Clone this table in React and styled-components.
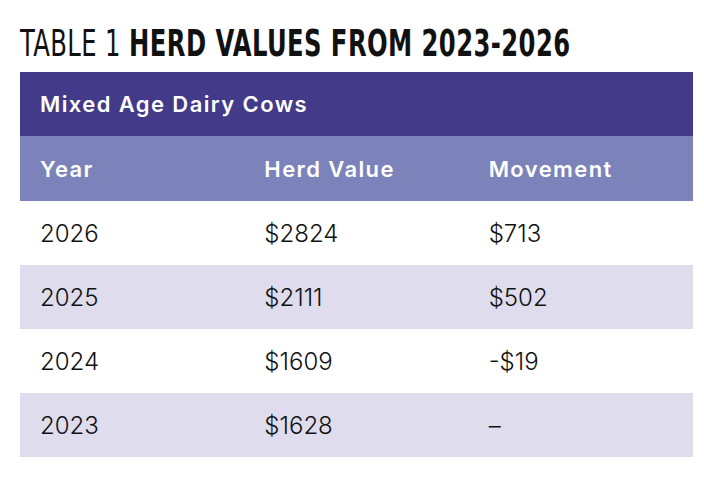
import React from "react";
import styled, { createGlobalStyle } from "styled-components";

const Global = createGlobalStyle`
  html, body { margin: 0; padding: 0; background: #fff; }
  body { font-family: Inter, "Noto Sans", sans-serif; }
`;

const Page = styled.div`
  width: 704px;
  height: 482px;
  box-sizing: border-box;
  padding: 24px 11px 0 20px;
  background: #fff;
`;

const Title = styled.h1`
  margin: 0 0 10px;
  height: 38px;
  font-family: "DejaVu Sans Condensed", "Liberation Sans", sans-serif;
  font-size: 38px;
  line-height: 38px;
  color: #111;
  letter-spacing: 0.6px;
  white-space: nowrap;
  transform: scaleX(0.71);
  transform-origin: left center;
`;

const Light = styled.span`
  font-weight: 400;
`;

const Strong = styled.span`
  font-weight: 700;
`;

const Table = styled.table`
  width: 673px;
  border-collapse: collapse;
  table-layout: fixed;
  font-family: Inter, "Noto Sans", sans-serif;
`;

const GroupRow = styled.tr`
  background: #433a89;
  height: 64px;
`;

const HeaderText = styled.th`
  padding: 0 20px;
  text-align: left;
  color: #fff;
  font-size: 22px;
  font-weight: 600;
  letter-spacing: 1.4px;
`;

const HeadRow = styled.tr`
  background: #7b83ba;
  height: 65px;
`;

const BodyRow = styled.tr`
  height: 64px;
  background: ${(p) => (p.$striped ? "#dedced" : "#fff")};
`;

const Cell = styled.td`
  padding: 0 20px;
  color: #111;
  font-size: 24px;
  font-weight: 300;
`;

const rows = [
  ["2026", "$2824", "$713"],
  ["2025", "$2111", "$502"],
  ["2024", "$1609", "-$19"],
  ["2023", "$1628", "–"],
];

export default function App() {
  return (
    <>
      <Global />
      <Page>
        <Title>
          <Light>TABLE 1 </Light>
          <Strong>HERD VALUES FROM 2023-2026</Strong>
        </Title>
        <Table>
          <thead>
            <GroupRow>
              <HeaderText colSpan={3}>Mixed Age Dairy Cows</HeaderText>
            </GroupRow>
            <HeadRow>
              <HeaderText>Year</HeaderText>
              <HeaderText>Herd Value</HeaderText>
              <HeaderText>Movement</HeaderText>
            </HeadRow>
          </thead>
          <tbody>
            {rows.map((r, i) => (
              <BodyRow key={r[0]} $striped={i % 2 === 1}>
                {r.map((c, j) => (
                  <Cell key={j}>{c}</Cell>
                ))}
              </BodyRow>
            ))}
          </tbody>
        </Table>
      </Page>
    </>
  );
}
